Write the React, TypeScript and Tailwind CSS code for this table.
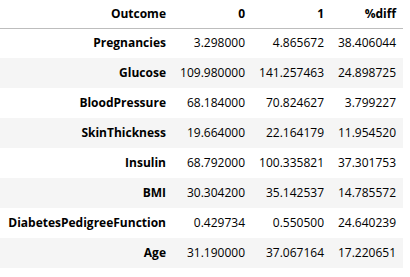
import React from "react";

const rows: [string, string, string, string][] = [
  ["Pregnancies", "3.298000", "4.865672", "38.406044"],
  ["Glucose", "109.980000", "141.257463", "24.898725"],
  ["BloodPressure", "68.184000", "70.824627", "3.799227"],
  ["SkinThickness", "19.664000", "22.164179", "11.954520"],
  ["Insulin", "68.792000", "100.335821", "37.301753"],
  ["BMI", "30.304200", "35.142537", "14.785572"],
  ["DiabetesPedigreeFunction", "0.429734", "0.550500", "24.640239"],
  ["Age", "31.190000", "37.067164", "17.220651"],
];

export default function App() {
  return (
    <div className="bg-white w-[410px] h-[277px] text-black text-[12px]" style={{ fontFamily: '"Open Sans", sans-serif' }}>
      <table className="w-[403px] table-fixed border-collapse">
        <colgroup>
          <col className="w-[173px]" />
          <col className="w-[79px]" />
          <col className="w-[79px]" />
          <col className="w-[72px]" />
        </colgroup>
        <thead>
          <tr className="h-[28px] border-b border-[#bdbdbd]">
            <th className="text-right font-bold pr-[7px] p-0 align-middle">Outcome</th>
            <th className="text-right font-bold pr-[7px] p-0 align-middle">0</th>
            <th className="text-right font-bold pr-[7px] p-0 align-middle">1</th>
            <th className="text-right font-bold pr-[7px] p-0 align-middle">%diff</th>
          </tr>
        </thead>
        <tbody>
          {rows.map((r, i) => (
            <tr key={r[0]} className={`h-[30px] ${i % 2 === 1 ? "bg-[#f5f5f5]" : "bg-white"}`}>
              <th className="text-right font-bold pr-[7px] p-0 align-middle">{r[0]}</th>
              <td className="text-right pr-[7px] p-0 align-middle">{r[1]}</td>
              <td className="text-right pr-[7px] p-0 align-middle">{r[2]}</td>
              <td className="text-right pr-[7px] p-0 align-middle">{r[3]}</td>
            </tr>
          ))}
        </tbody>
      </table>
    </div>
  );
}
